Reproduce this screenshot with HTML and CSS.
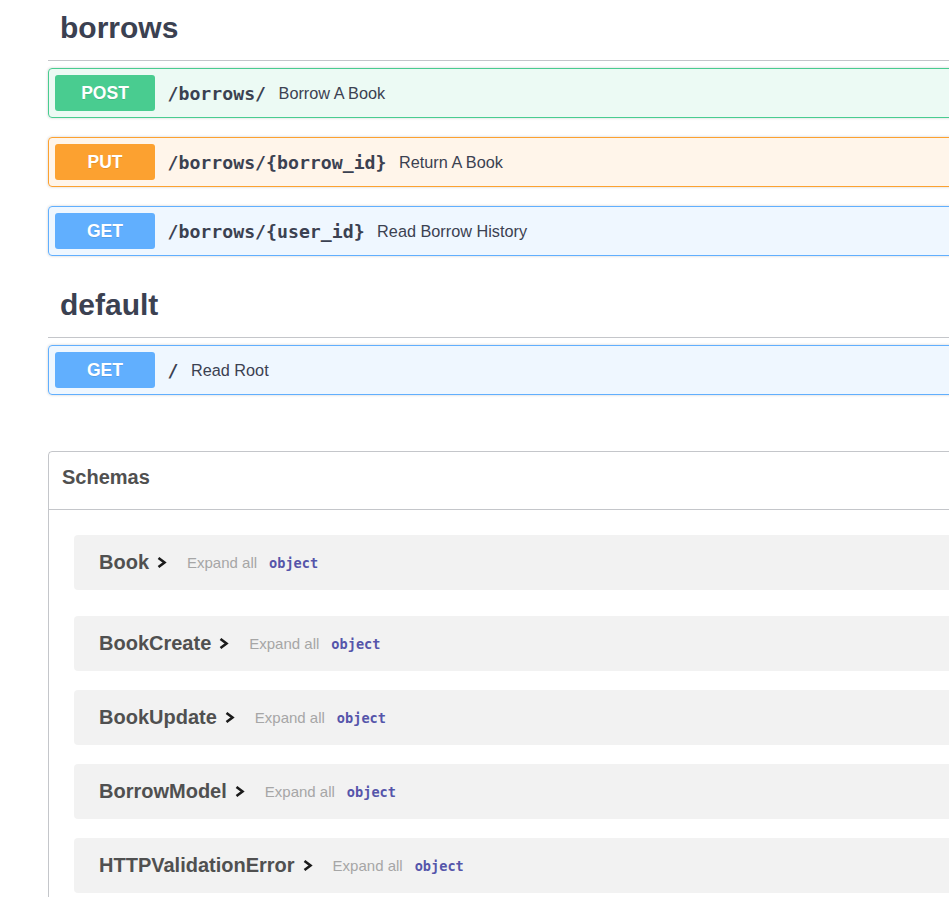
FILE: index.html
```html
<!DOCTYPE html>
<html lang="en">
<head>
<meta charset="utf-8">
<title>Swagger UI</title>
<link rel="stylesheet" href="styles.css">
</head>
<body>
<div class="wrapper">
  <section class="tag-section">
    <h3 class="tag-title">borrows</h3>
    <div class="opblocks">
      <div class="opblock opblock-post">
        <span class="method">POST</span>
        <span class="path">/borrows/</span>
        <span class="desc">Borrow A Book</span>
      </div>
      <div class="opblock opblock-put">
        <span class="method">PUT</span>
        <span class="path">/borrows/{borrow_id}</span>
        <span class="desc">Return A Book</span>
      </div>
      <div class="opblock opblock-get">
        <span class="method">GET</span>
        <span class="path">/borrows/{user_id}</span>
        <span class="desc">Read Borrow History</span>
      </div>
    </div>
  </section>

  <section class="tag-section tag-section-next">
    <h3 class="tag-title">default</h3>
    <div class="opblocks">
      <div class="opblock opblock-get">
        <span class="method">GET</span>
        <span class="path">/</span>
        <span class="desc">Read Root</span>
      </div>
    </div>
  </section>

  <section class="models">
    <h4 class="models-title">Schemas</h4>
    <div class="models-body">
      <div class="model-box model-first">
        <span class="model-title">Book</span>
        <svg class="chev" width="10" height="11" viewBox="0 0 10 11"><polyline points="1.5,1 7.5,5.5 1.5,10" /></svg>
        <span class="expand">Expand all</span>
        <span class="ptype">object</span>
      </div>
      <div class="model-box model-second">
        <span class="model-title">BookCreate</span>
        <svg class="chev" width="10" height="11" viewBox="0 0 10 11"><polyline points="1.5,1 7.5,5.5 1.5,10" /></svg>
        <span class="expand">Expand all</span>
        <span class="ptype">object</span>
      </div>
      <div class="model-box">
        <span class="model-title">BookUpdate</span>
        <svg class="chev" width="10" height="11" viewBox="0 0 10 11"><polyline points="1.5,1 7.5,5.5 1.5,10" /></svg>
        <span class="expand">Expand all</span>
        <span class="ptype">object</span>
      </div>
      <div class="model-box">
        <span class="model-title">BorrowModel</span>
        <svg class="chev" width="10" height="11" viewBox="0 0 10 11"><polyline points="1.5,1 7.5,5.5 1.5,10" /></svg>
        <span class="expand">Expand all</span>
        <span class="ptype">object</span>
      </div>
      <div class="model-box">
        <span class="model-title">HTTPValidationError</span>
        <svg class="chev" width="10" height="11" viewBox="0 0 10 11"><polyline points="1.5,1 7.5,5.5 1.5,10" /></svg>
        <span class="expand">Expand all</span>
        <span class="ptype">object</span>
      </div>
    </div>
  </section>
</div>
</body>
</html>
```
FILE: styles.css
```css
html, body {
  margin: 0;
  padding: 0;
  background: #fff;
  overflow: hidden;
}

body {
  font-family: "Liberation Sans", Arial, sans-serif;
  color: #3b4151;
}

.wrapper {
  margin-left: 48px;
  width: 1100px;
}

.tag-section-next {
  margin-top: 21px;
}

.tag-title {
  margin: 0;
  padding: 10px 12px 14px 12px;
  font-size: 30px;
  line-height: 36px;
  font-weight: bold;
  color: #3b4151;
  border-bottom: 1px solid rgba(59, 65, 81, 0.3);
}

.opblocks {
  padding-top: 7px;
}

.opblock {
  display: flex;
  align-items: center;
  box-sizing: border-box;
  height: 50px;
  padding: 6px;
  margin-bottom: 19px;
  border: 1px solid;
  border-radius: 4px;
  box-shadow: 0 0 3px rgba(0, 0, 0, 0.19);
}

.opblock-post {
  border-color: #49cc90;
  background: rgba(73, 204, 144, 0.1);
}

.opblock-put {
  border-color: #fca130;
  background: rgba(252, 161, 48, 0.1);
}

.opblock-get {
  border-color: #61affe;
  background: rgba(97, 175, 254, 0.1);
}

.method {
  flex: 0 0 100px;
  height: 36px;
  line-height: 36px;
  text-align: center;
  border-radius: 3px;
  color: #fff;
  font-size: 17.5px;
  font-weight: bold;
  text-shadow: 0 1px 0 rgba(0, 0, 0, 0.1);
}

.opblock-post .method { background: #49cc90; }
.opblock-put .method { background: #fca130; }
.opblock-get .method { background: #61affe; }

.path {
  padding: 0 12.5px;
  font-family: "DejaVu Sans Mono", "Liberation Mono", monospace;
  font-size: 18.2px;
  font-weight: bold;
  color: #3b4151;
}

.desc {
  font-size: 16.25px;
  color: #3b4151;
}

.models {
  margin-top: 56px;
  border: 1px solid rgba(59, 65, 81, 0.3);
  border-radius: 4px;
}

.models-title {
  margin: 0;
  padding: 14px 12px 20px 13px;
  font-size: 20px;
  line-height: 23px;
  font-weight: bold;
  color: #505050;
  border-bottom: 1px solid rgba(59, 65, 81, 0.3);
}

.models-body {
  padding: 0 25px 20px;
}

.model-box {
  display: flex;
  align-items: center;
  height: 55px;
  padding-left: 25px;
  margin-top: 19px;
  border-radius: 4px;
  background: rgba(0, 0, 0, 0.05);
}

.model-first {
  margin-top: 25px;
}

.model-second {
  margin-top: 26px;
}

.model-title {
  font-size: 20px;
  font-weight: bold;
  color: #505050;
}

.chev {
  margin-left: 8px;
  fill: none;
  stroke: #1b1b1b;
  stroke-width: 2.6;
}

.expand {
  margin-left: 20px;
  font-size: 15px;
  color: #a6a6a6;
}

.ptype {
  margin-left: 12px;
  font-family: "DejaVu Sans Mono", "Liberation Mono", monospace;
  font-size: 13.6px;
  font-weight: bold;
  color: #55a;
}
```
